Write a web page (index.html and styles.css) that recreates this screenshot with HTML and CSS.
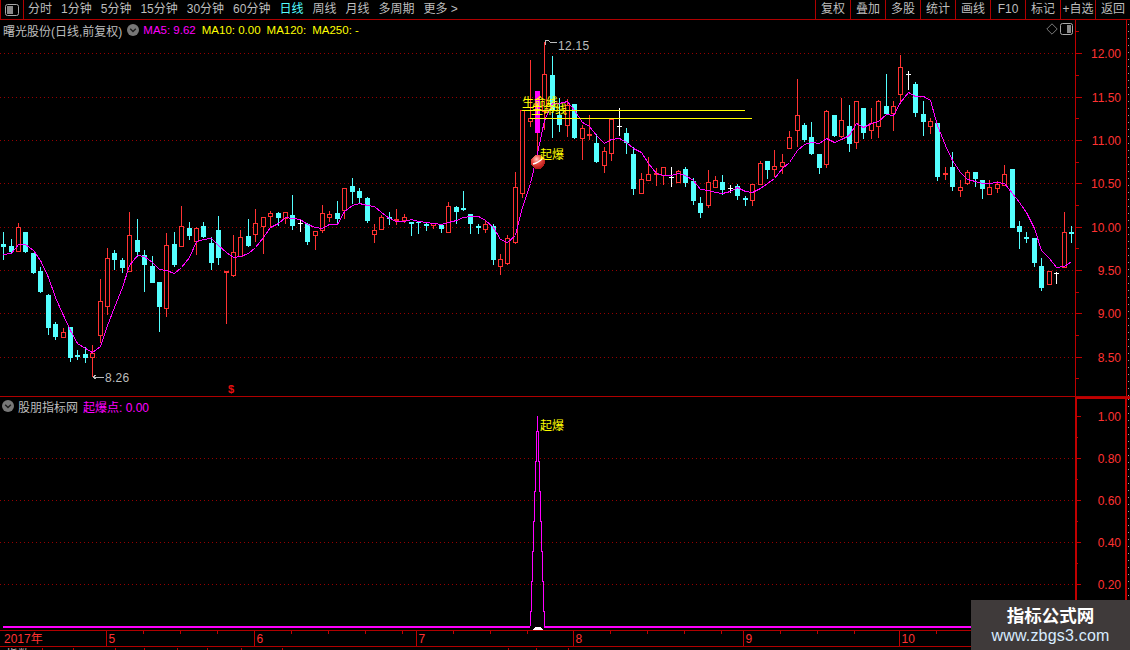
FILE: index.html
```html
<!DOCTYPE html>
<html lang="zh-CN">
<head>
<meta charset="utf-8">
<title>曙光股份 日线</title>
<link rel="stylesheet" href="styles.css">
</head>
<body>
<div class="app">
  <header class="toolbar">
    <div class="tb-icon">
      <svg width="14" height="12" viewBox="0 0 14 12"><rect x="0.5" y="0.5" width="13" height="11" rx="2" class="win-frame"/><rect x="2" y="2" width="6" height="8" class="win-fill"/></svg>
    </div>
    <nav class="periods">
      <span>分时</span><span>1分钟</span><span>5分钟</span><span>15分钟</span><span>30分钟</span><span>60分钟</span>
      <span class="active">日线</span><span>周线</span><span>月线</span><span>多周期</span><span>更多 &gt;</span>
    </nav>
    <div class="actions">
      <span>复权</span><span>叠加</span><span>多股</span><span>统计</span><span>画线</span><span>F10</span><span>标记</span><span>+自选</span><span>返回</span>
    </div>
  </header>

  <section class="panel price">
    <div class="legend">
      <span class="name">曙光股份(日线,前复权)</span>
      <svg class="chev" width="12" height="12" viewBox="0 0 12 12"><circle cx="6" cy="6" r="6"/><path d="M3.2 4.8 6 7.6 8.8 4.8"/></svg>
      <span class="mag">MA5: 9.62</span>
      <span class="yel">MA10: 0.00</span>
      <span class="yel">MA120:</span>
      <span class="yel">MA250: -</span>
    </div>
    <div class="corner">
      <svg width="12" height="12" viewBox="0 0 12 12"><path d="M6 .8 11.2 6 6 11.2 .8 6Z" class="diamond"/></svg>
      <svg width="13" height="12" viewBox="0 0 13 12"><rect x="0.5" y="0.5" width="12" height="11" rx="2" class="win-frame"/><rect x="7" y="2" width="4" height="8" class="win-fill"/></svg>
    </div>
    <svg id="price" class="plot" width="1130" height="376" viewBox="0 20 1130 376">
      <defs>
        <radialGradient id="ball" cx="40%" cy="30%" r="75%">
          <stop offset="0" stop-color="#ffc8c0"/>
          <stop offset="0.45" stop-color="#e8483e"/>
          <stop offset="1" stop-color="#a81010"/>
        </radialGradient>
      </defs>
      <g id="pGrid"></g>
      <g id="pCandles"></g>
      <polyline id="ma5" class="ma"/>
      <text class="ann yel-t" x="522" y="107">生命线</text>
      <text class="ann yel-t" x="531" y="114">生命线</text>
      <line class="yline" x1="522" y1="110.5" x2="745" y2="110.5"/>
      <line class="yline" x1="530" y1="118.5" x2="752" y2="118.5"/>
      <circle cx="538" cy="162" r="7" fill="url(#ball)"/>
      <path d="M533 164 Q538 163 543 158" class="ball-stripe"/>
      <text class="ann yel-t" x="540" y="159">起爆</text>
      <path class="pin" d="M545 45V40.5H548L551 42.5H557"/>
      <text class="ext" x="558" y="50">12.15</text>
      <path class="pin" d="M93 377H104M93 377l3-2M93 377l3 2"/>
      <text class="ext" x="105" y="382">8.26</text>
      <text class="sig" x="228" y="393">$</text>
    </svg>
  </section>

  <section class="panel indicator">
    <div class="legend">
      <svg class="chev" width="12" height="12" viewBox="0 0 12 12"><circle cx="6" cy="6" r="6"/><path d="M3.2 4.8 6 7.6 8.8 4.8"/></svg>
      <span class="name">股朋指标网</span>
      <span class="mag">起爆点: 0.00</span>
    </div>
    <svg id="ind" class="plot" width="1130" height="233" viewBox="0 397 1130 233">
      <g id="iGrid"></g>
      <path class="base" d="M3 626.5H530M544 626.5H1075"/>
      <polyline class="spike" points="530.5,626 530.5,611 531.5,611 531.5,581 532.5,581 532.5,551 533.5,551 533.5,521 534.5,521 534.5,491 535.5,491 535.5,461 536.5,461 536.5,431 537.5,431 537.5,416 537.5,431 538.5,431 538.5,461 539.5,461 539.5,491 540.5,491 540.5,521 541.5,521 541.5,551 542.5,551 542.5,581 543.5,581 543.5,611 544.5,611 544.5,626"/>
      <ellipse class="half" cx="538" cy="630" rx="5" ry="3"/>
      <text class="ann yel-t" x="540" y="430">起爆</text>
    </svg>
  </section>

  <section class="panel timeline">
    <svg id="time" class="plot" width="1130" height="15" viewBox="0 631 1130 15"></svg>
  </section>

  <svg id="foot" class="foot" width="1130" height="3" viewBox="0 647 1130 3">
    <text class="foot-t" x="6" y="658">指数</text>
    <text class="foot-t" x="48" y="658">153</text>
  </svg>

  <aside class="stamp">
    <strong>指标公式网</strong>
    <span>www.zbgs3.com</span>
  </aside>
</div>
<script src="app.js"></script>
</body>
</html>
```

FILE: styles.css
```css
* { box-sizing: border-box; }
html, body { margin: 0; padding: 0; background: #000; }
body { font-family: "Liberation Sans", "Noto Sans CJK SC", sans-serif; font-size: 12px; color: #bdbdbd; }
.app { position: relative; width: 1130px; height: 650px; overflow: hidden; background: #000; display: flex; flex-direction: column; }

.toolbar { height: 20px; flex: none; display: flex; align-items: stretch; border-bottom: 1px solid #b00000; line-height: 19px; }
.tb-icon { width: 24px; flex: none; display: flex; align-items: center; justify-content: center; border-right: 1px solid #b00000; border-left: 1px solid #b00000; }
.win-frame { fill: none; stroke: #a8a8a8; }
.win-fill { fill: #8a8a8a; }
.periods { display: flex; gap: 9px; padding-left: 4px; }
.periods .active { color: #54ffff; }
.actions { margin-left: auto; display: flex; }
.actions span { width: 35px; text-align: center; border-left: 1px solid #b00000; }

.panel { position: relative; flex: none; border-bottom: 1px solid #b00000; }
.price { height: 377px; }
.indicator { height: 234px; }
.timeline { height: 16px; }
.plot { display: block; shape-rendering: crispEdges; }
.foot { display: block; flex: none; margin-top: 1px; shape-rendering: crispEdges; }
.foot-t { fill: #bdbdbd; font-size: 12px; }

.legend { position: absolute; left: 3px; top: 2px; display: flex; align-items: center; gap: 6px; height: 16px; z-index: 1; }
.indicator .legend { left: 2px; top: 1px; gap: 4px; }
.indicator .legend .mag { margin-left: 1px; font-size: 12px; }
.legend .name { color: #bdbdbd; }
.legend .mag, .legend .yel { font-size: 11.5px; }
.price .legend .chev { margin-left: -1px; margin-right: -2px; }
.mag { color: #ff00ff; }
.yel { color: #ffff00; }
.chev { flex: none; }
.chev circle { fill: #777; }
.chev path { fill: none; stroke: #1c1c1c; stroke-width: 1.4; }
.corner { position: absolute; right: 57px; top: 3px; display: flex; gap: 2px; align-items: center; z-index: 1; }
.diamond { fill: none; stroke: #7a7a7a; }

.grid-line { stroke: #960000; stroke-width: 1; stroke-dasharray: 1 3; }
.axis-line { stroke: #c00000; fill: none; }
.axis-thick { stroke: #c00000; stroke-width: 2; fill: none; }
.axis-gray { stroke: #a0a0a0; stroke-dasharray: 1 6; }
.axis-label { fill: #ff3232; font-size: 12px; letter-spacing: 0; }
.c-up { fill: #000; stroke: #ff3232; }
.c-down { fill: #54ffff; stroke: none; }
.wick-up { stroke: #ff3232; }
.wick-down { stroke: #54ffff; }
.wick-flat { stroke: #fff; }
.c-hot { fill: #ff00ff; stroke: none; }
.ma { fill: none; stroke: #ff00ff; stroke-width: 1; }
.yline { stroke: #ffff00; }
.ann { font-size: 12px; shape-rendering: auto; }
.yel-t { fill: #ffff00; }
.pin { fill: none; stroke: #bdbdbd; }
.ext { fill: #bdbdbd; font-size: 12px; letter-spacing: 0.3px; }
.sig { fill: #e81010; font-size: 11px; font-weight: 700; }
.ball-stripe { fill: none; stroke: #fff; stroke-width: 1.4; shape-rendering: auto; }
.base { stroke: #ff00ff; stroke-width: 2; fill: none; }
.spike { stroke: #ff00ff; fill: none; }
.half { fill: #fff; }

.stamp { position: absolute; left: 971px; top: 600px; width: 159px; height: 50px; background: #3f3a3a; display: flex; flex-direction: column; align-items: center; z-index: 2; }
.stamp strong { font-size: 17.5px; line-height: 24px; margin-top: 3px; color: #fff; font-family: "Noto Sans CJK SC", sans-serif; }
.stamp span { font-size: 16px; line-height: 18px; color: #d8ecff; letter-spacing: 0.2px; }
```

FILE: app.js
```js
var NS = "http://www.w3.org/2000/svg";
// t: c cyan (down), r red (up), w flat, m highlighted; high, top, bottom, low, ma5
var D = [
["c",232,244,247,260,254],["c",239,246,252,253,253],["r",223,227,252,252,244],["c",232,232,252,253,244],
["c",253,253,273,274,250],["c",267,271,292,293,260],["c",294,295,328,335,277],["c",322,324,337,340,297],
["r",328,332,338,338,315],["c",327,327,358,362,330],["c",350,355,357,360,343],["c",347,354,358,363,348],
["r",345,353,358,377,352],["r",279,301,336,343,346],["r",248,258,307,315,325],["c",250,253,260,270,307],
["c",258,260,268,273,287],["r",212,235,272,272,265],["c",219,240,252,257,255],["c",250,255,265,292,256],
["c",256,266,283,283,262],["c",282,282,307,332,269],["r",233,245,309,317,270],["c",232,244,265,267,273],
["r",206,226,247,247,267],["c",222,228,236,240,257],["r",227,228,242,255,241],["c",222,226,237,238,239],
["c",237,243,263,270,238],["c",216,230,258,265,245],["r",271,271,273,324,252],["r",235,252,276,277,257],
["r",230,237,257,257,256],["c",219,236,246,247,253],["r",209,223,235,242,247],["r",217,217,227,254,237],
["r",211,213,217,227,227],["c",212,213,218,226,223],["r",212,212,219,224,217],["c",195,215,226,230,218],
["w",219,223,223,232,219],["c",223,224,242,245,224],["r",231,231,236,250,227],["r",205,213,231,233,228],
["r",211,214,218,222,224],["c",201,213,219,223,224],["r",188,188,211,219,211],["c",178,186,192,204,205],
["c",188,191,198,203,203],["c",197,198,221,223,205],["r",224,230,235,243,206],["r",215,217,230,230,212],
["c",212,217,219,225,218],["r",209,219,221,225,221],["r",214,217,221,223,221],["c",222,222,224,236,219],
["c",221,222,223,234,221],["c",222,224,226,231,222],["r",223,223,226,229,223],["c",225,225,229,233,224],
["r",202,206,233,233,222],["c",206,207,212,224,220],["c",191,208,210,211,217],["c",214,214,224,234,216],
["c",224,226,228,234,216],["r",220,224,230,233,220],["c",224,226,260,265,227],["r",254,259,267,275,239],
["r",235,238,264,265,242],["r",172,187,243,244,235],["r",110,110,194,198,207],["r",60,118,122,127,183],
["m",91,91,133,155,153],["r",42,74,112,130,120],["c",56,75,110,138,103],["c",98,115,125,132,103],
["r",99,105,126,137,101],["c",104,104,138,139,110],["r",125,128,139,160,122],["r",115,134,136,140,126],
["c",134,143,162,163,135],["r",147,151,166,173,143],["r",119,119,154,161,139],["w",108,126,126,136,138],
["c",128,133,143,154,142],["c",147,154,189,195,148],["r",173,179,194,194,152],["r",157,174,181,181,163],
["r",168,173,174,186,173],["r",167,167,176,185,175],["w",167,177,177,187,175],["r",170,171,183,183,173],
["c",167,169,183,187,175],["c",178,181,201,205,180],["c",197,203,213,218,189],["r",170,182,206,208,190],
["r",176,180,188,188,192],["c",175,182,190,195,193],["w",185,188,188,193,191],["c",184,186,196,200,187],
["c",196,198,200,206,191],["r",184,184,201,206,192],["r",161,163,185,185,188],["c",161,161,170,179,183],
["r",150,166,170,177,178],["r",154,162,167,174,168],["r",131,137,149,149,162],["r",79,115,131,147,150],
["c",123,125,140,142,144],["c",122,137,154,155,142],["c",154,154,168,174,143],["r",110,111,165,168,138],
["c",115,115,136,137,142],["r",98,120,137,138,139],["c",105,126,144,152,135],["r",101,101,143,149,123],
["c",108,108,133,139,127],["r",108,123,131,139,123],["r",100,101,127,138,121],["c",74,106,114,114,114],
["r",101,106,114,131,115],["r",55,67,95,103,102],["w",71,74,74,90,92],["c",82,84,113,117,96],
["c",101,114,122,136,96],["r",118,121,127,134,100],["c",123,123,177,181,125],["r",167,173,175,180,145],
["c",152,167,187,191,160],["r",180,187,191,197,172],["r",170,172,184,185,179],["c",172,172,179,187,181],
["c",180,180,189,199,183],["r",180,187,195,195,183],["r",181,184,189,193,182],["r",165,174,186,186,183],
["c",169,169,228,228,193],["c",221,226,232,249,202],["c",232,237,239,243,212],["c",238,238,263,267,228],
["c",258,266,288,291,250],["r",271,271,285,285,258],["w",272,273,273,284,267],["r",212,232,268,268,266],
["c",226,232,234,243,261]
];

function el(parent, tag, attrs, text) {
  var n = document.createElementNS(NS, tag);
  for (var k in attrs) n.setAttribute(k, attrs[k]);
  if (text !== undefined) n.textContent = text;
  parent.appendChild(n);
  return n;
}
function vline(p, x, y1, y2, cls) { if (y2 > y1) el(p, "line", {x1: x, x2: x, y1: y1, y2: y2, "class": cls}); }
function px(i) { return Math.floor(3.7 + i * 7.415) + 0.5; }

// price panel
var pg = document.getElementById("pGrid");
[["12.00",53.5],["11.50",97],["11.00",140],["10.50",183.5],["10.00",227],["9.50",270],["9.00",313],["8.50",357]].forEach(function (r) {
  var y = Math.floor(r[1]) + 0.5;
  el(pg, "line", {x1: 0, x2: 1075, y1: y, y2: y, "class": "grid-line"});
  el(pg, "line", {x1: 1076, x2: 1082, y1: y, y2: y, "class": "axis-line"});
  el(pg, "text", {x: 1121, y: y + 4.5, "class": "axis-label", "text-anchor": "end"}, r[0]);
});
[31.5,75.5,118.5,162.5,205.5,248.5,292.5,335.5,378.5].forEach(function (y) {
  el(pg, "line", {x1: 1076, x2: 1079, y1: y, y2: y, "class": "axis-line"});
});
el(pg, "line", {x1: 1075.5, x2: 1075.5, y1: 20, y2: 396, "class": "axis-line"});
el(pg, "line", {x1: 1126.5, x2: 1126.5, y1: 20, y2: 396, "class": "axis-line"});
el(pg, "line", {x1: 1128.5, x2: 1128.5, y1: 24, y2: 396, "class": "axis-gray"});

var cg = document.getElementById("pCandles");
var pts = [];
D.forEach(function (d, i) {
  var x = px(i), t = d[0];
  var hi = d[1], top = d[2], bot = d[3], lo = d[4];
  pts.push(x + "," + (d[5] + 0.5));
  if (t === "c") {
    vline(cg, x, hi, lo, "wick-down");
    el(cg, "rect", {x: x - 2.5, y: top, width: 5, height: Math.max(bot - top, 1), "class": "c-down"});
  } else if (t === "w") {
    vline(cg, x, hi, lo, "wick-flat");
    el(cg, "line", {x1: x - 2.5, x2: x + 2.5, y1: top + 0.5, y2: top + 0.5, "class": "wick-flat"});
  } else if (t === "m") {
    vline(cg, x, bot, lo, "wick-up");
    el(cg, "rect", {x: x - 2.5, y: top, width: 5, height: bot - top, "class": "c-hot"});
  } else {
    vline(cg, x, hi, top, "wick-up");
    vline(cg, x, bot, lo, "wick-up");
    el(cg, "rect", {x: x - 2, y: top + 0.5, width: 4, height: Math.max(bot - top - 1, 1), "class": "c-up"});
  }
});
document.getElementById("ma5").setAttribute("points", pts.join(" "));

// indicator panel
var ig = document.getElementById("iGrid");
[["1.00",416.5],["0.80",458.5],["0.60",500.5],["0.40",542.5],["0.20",584.5]].forEach(function (r, i) {
  var y = r[1];
  if (i > 0) el(ig, "line", {x1: 0, x2: 1075, y1: y, y2: y, "class": "grid-line"});
  el(ig, "line", {x1: 1076, x2: 1081, y1: y, y2: y, "class": "axis-line"});
  el(ig, "text", {x: 1121, y: y + 4.5, "class": "axis-label", "text-anchor": "end"}, r[0]);
  el(ig, "line", {x1: 1076, x2: 1078, y1: y + 21, y2: y + 21, "class": "axis-line"});
});
el(ig, "line", {x1: 1076, x2: 1076, y1: 397, y2: 630, "class": "axis-thick"});
el(ig, "line", {x1: 1126, x2: 1126, y1: 397, y2: 630, "class": "axis-thick"});
el(ig, "line", {x1: 1076, x2: 1130, y1: 398, y2: 398, "class": "axis-thick"});
el(ig, "line", {x1: 1128.5, x2: 1128.5, y1: 399, y2: 630, "class": "axis-gray"});

// time axis
var tm = document.getElementById("time");
el(tm, "text", {x: 4, y: 643, "class": "axis-label"}, "2017年");
var months = [[106.5,"5"],[254.5,"6"],[416.5,"7"],[573.5,"8"],[743.5,"9"],[899.5,"10"],[1076.5,""]];
months.forEach(function (m, i) {
  var x = m[0];
  vline(tm, x, 631, 646, "axis-line");
  if (m[1]) el(tm, "text", {x: x + 2, y: 643, "class": "axis-label"}, m[1]);
  if (i < months.length - 1) {
    for (var t = x + 37; t < months[i + 1][0] - 12; t += 37) {
      vline(tm, Math.floor(t) + 0.5, 631, 634, "axis-line");
    }
  }
});

// bottom strip
var ft = document.getElementById("foot");
[42,73,115,144,177,207,241,282,508,536,568].forEach(function (x) {
  vline(ft, x + 0.5, 647, 650, "axis-line");
});
```
